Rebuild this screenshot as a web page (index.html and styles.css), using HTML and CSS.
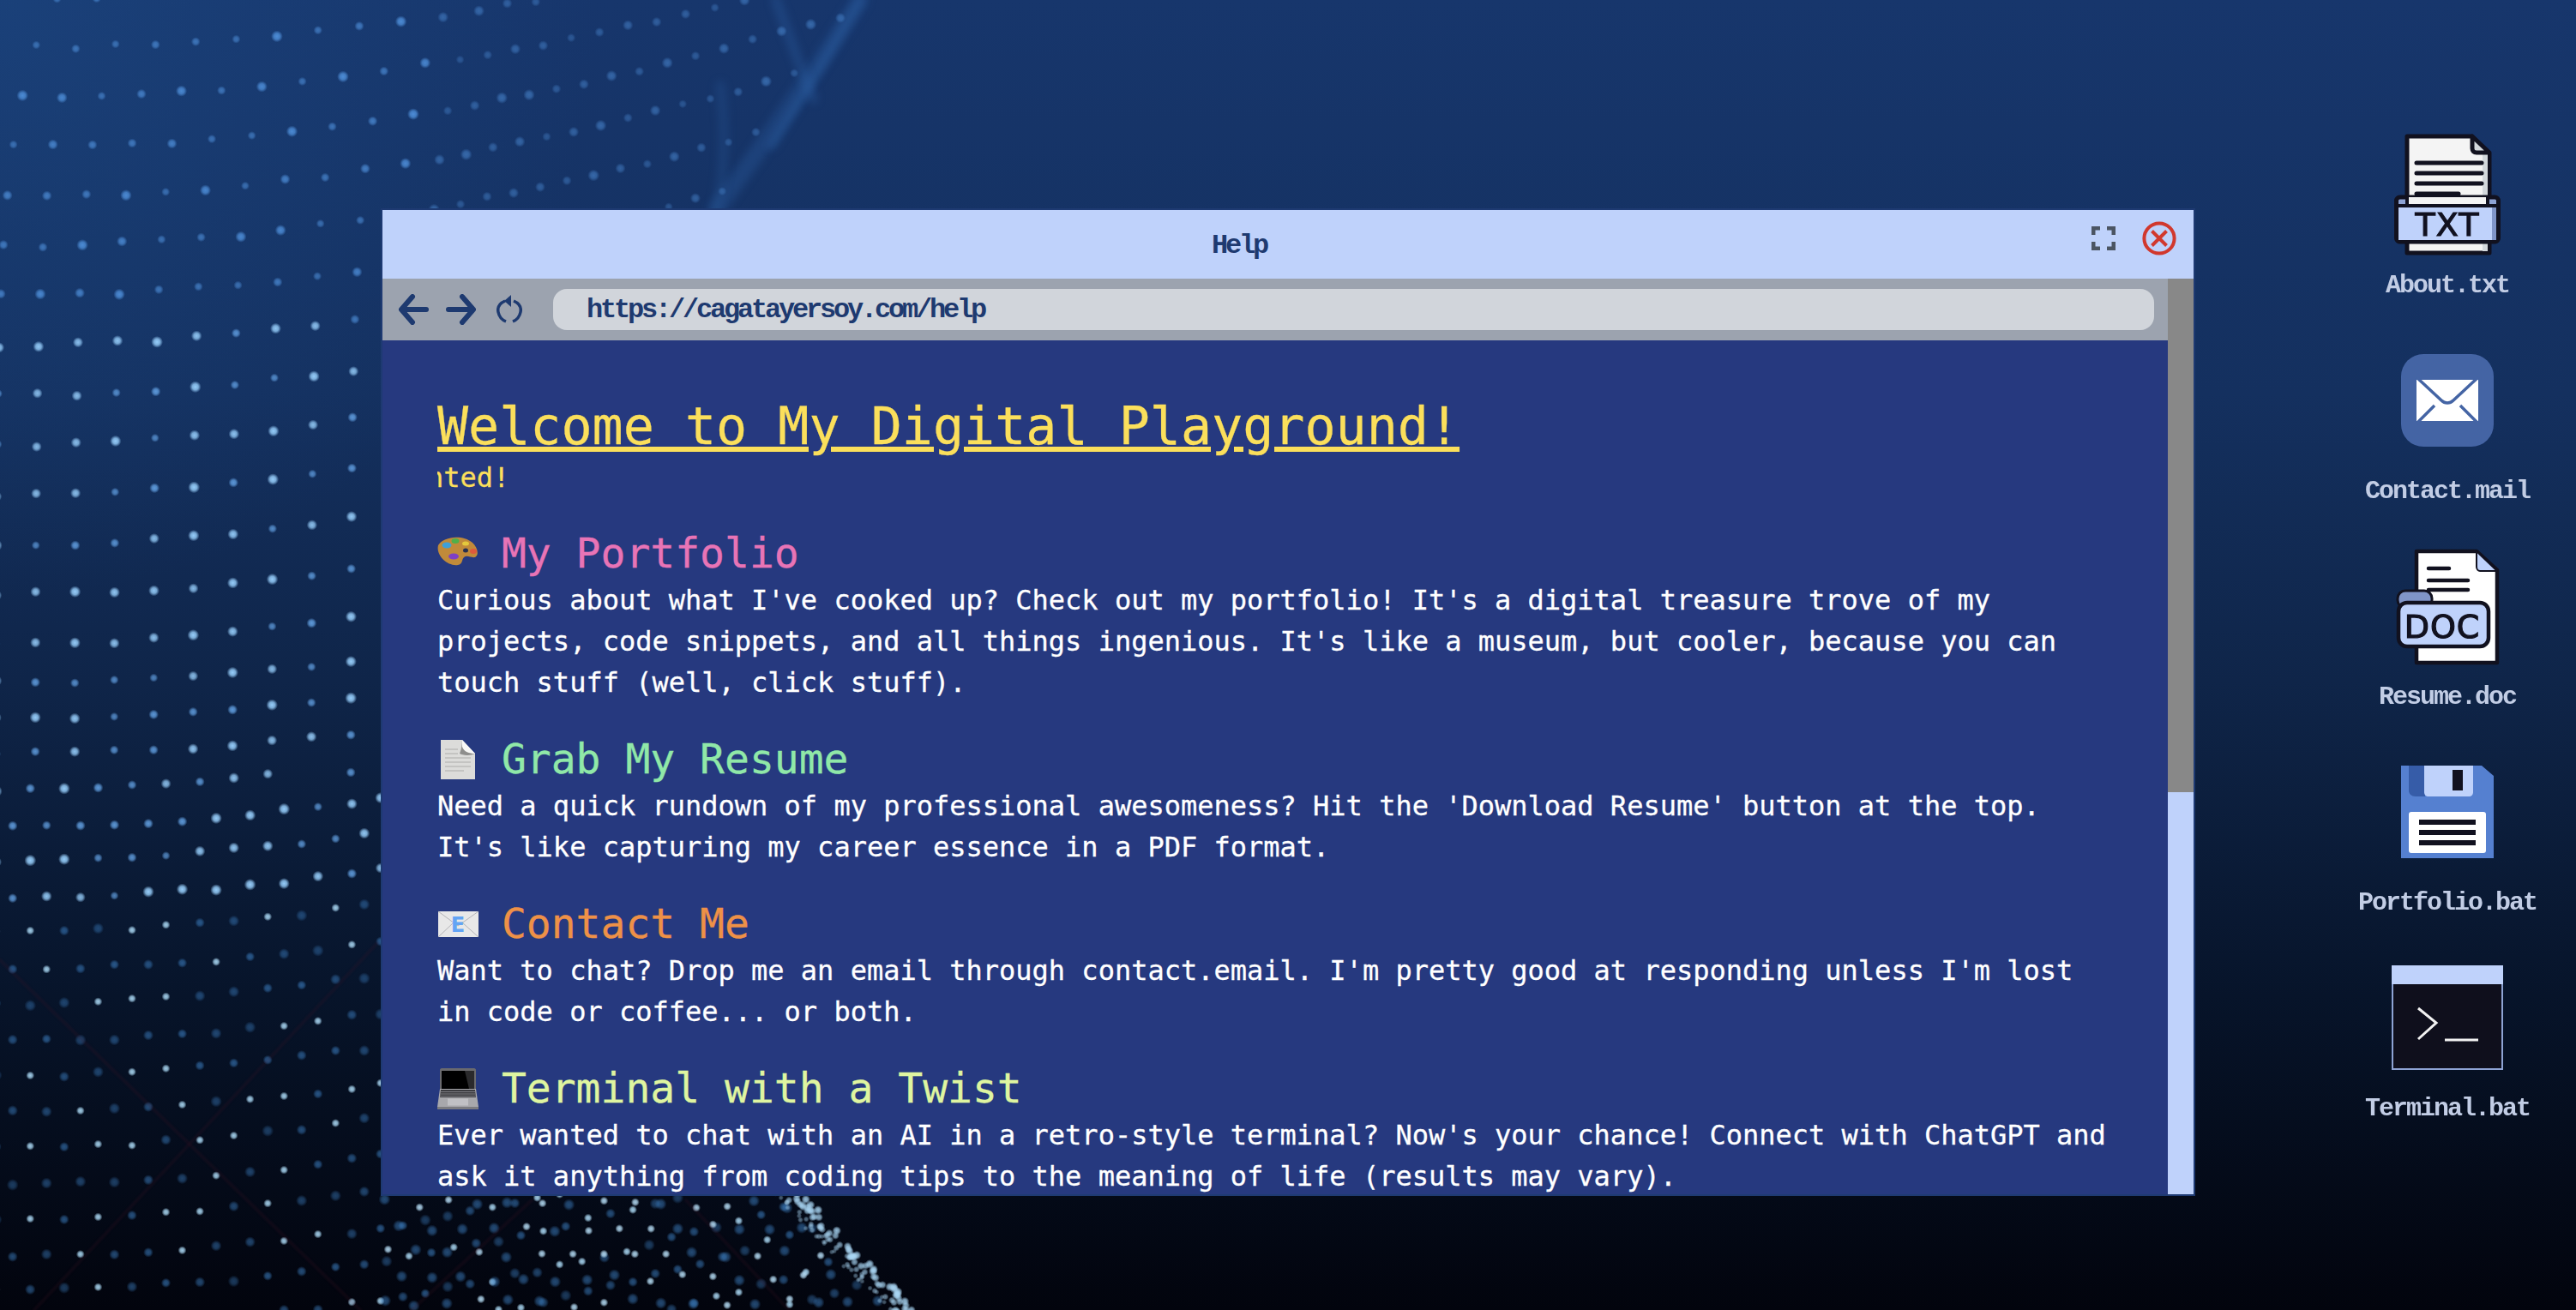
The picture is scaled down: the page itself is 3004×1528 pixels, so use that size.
FILE: index.html
```html
<!DOCTYPE html>
<html lang="en">
<head>
    <meta charset="UTF-8">
    <title>Help</title>
    <link rel="stylesheet" href="styles.css">
</head>
<body>

<canvas id="wallpaper" class="wallpaper" width="3004" height="1528"></canvas>

<div class="window">
    <div class="title-bar">
        <div class="title">Help</div>
        <div class="window-controls">
            <svg class="icon-full" viewBox="0 0 28 28"><path d="M2 10V2h8M18 2h8v8M26 18v8h-8M10 26H2v-8"/></svg>
            <svg class="icon-close" viewBox="0 0 40 40"><circle cx="20" cy="20" r="17.6"/><path d="M11.500 11.500l17 17M28.500 11.500l-17 17"/></svg>
        </div>
    </div>
    <div class="window-body">
        <div class="window-main">
            <div class="toolbar">
                <svg class="nav-arrow" viewBox="0 0 36 36"><path d="M33 18H5M17 3L4 18l13 15"/></svg>
                <svg class="nav-arrow" viewBox="0 0 36 36"><path d="M3 18h28M19 3l13 15-13 15"/></svg>
                <svg class="nav-reload" viewBox="0 0 30 34"><path d="M10 7C3 10 1 15 2 20c1 5 4 9 9 11M20 7c7 3 9 8 8 13-1 5-4 9-9 11"/><path class="solid" d="M17 0v14l-8-7z"/></svg>
                <div class="url-bar">https://cagatayersoy.com/help</div>
            </div>
            <div class="content">
                <h1>Welcome to My Digital Playground!</h1>
                <div class="tagline"><span>nted!</span></div>

                <section class="topic">
                    <h2 class="pink">
                        <svg class="emoji" viewBox="0 0 48 48">
                            <path d="M1 14C7 4 29 1 41 11c6 6 8 14 3 17-5 1-9-3-13 0-3 3-1 8-7 9C12 39-2 26 1 14z" fill="#c08a3a"/>
                            <ellipse cx="11" cy="14" rx="5.500" ry="3.500" fill="#3fa0d8"/>
                            <ellipse cx="21" cy="9" rx="4.500" ry="3" fill="#4fb04a"/>
                            <ellipse cx="33" cy="12" rx="4" ry="2.500" fill="#e4c83c"/>
                            <ellipse cx="19" cy="27" rx="6" ry="3.500" fill="#7e3fc4"/>
                            <ellipse cx="33" cy="20" rx="3" ry="2.500" fill="#26304f"/>
                            <ellipse cx="42" cy="21" rx="4" ry="3" fill="#de5a3c"/>
                        </svg>
                        My Portfolio
                    </h2>
                    <p>Curious about what I've cooked up? Check out my portfolio! It's a digital treasure trove of my projects, code snippets, and all things ingenious. It's like a museum, but cooler, because you can touch stuff (well, click stuff).</p>
                </section>

                <section class="topic">
                    <h2 class="green">
                        <svg class="emoji" viewBox="0 0 48 48">
                            <path d="M4 1h25l15 16v30H4z" fill="#dcdcda"/>
                            <path d="M29 1c0 8 2 14 15 16-6 3-15 2-18 0 2-5 3-11 3-16z" fill="#8e8e8c"/>
                            <path d="M29 1l15 16c-7 0-13-2-15-8z" fill="#f8f8f6"/>
                            <path d="M9 12h15M9 17h15M9 22h30M9 27h30M9 32h30M9 37h22" stroke="#bcbcba" stroke-width="1.500"/>
                        </svg>
                        Grab My Resume
                    </h2>
                    <p>Need a quick rundown of my professional awesomeness? Hit the 'Download Resume' button at the top. It's like capturing my career essence in a PDF format.</p>
                </section>

                <section class="topic">
                    <h2 class="orange">
                        <svg class="emoji" viewBox="0 0 48 48">
                            <rect x="1" y="9" width="47" height="30" fill="#e8e8e8"/>
                            <path d="M1 9l23 17L48 9M1 39l18-17M48 39L29 22" fill="none" stroke="#b4b4b8" stroke-width="1"/>
                            <text class="emoji-e" x="24" y="33" text-anchor="middle">E</text>
                        </svg>
                        Contact Me
                    </h2>
                    <p>Want to chat? Drop me an email through contact.email. I'm pretty good at responding unless I'm lost in code or coffee... or both.</p>
                </section>

                <section class="topic">
                    <h2 class="lime">
                        <svg class="emoji" viewBox="0 0 48 48">
                            <path d="M3 2c0-1 1-2 2-2h38c1 0 2 1 2 2v22H3z" fill="#6a6a6e"/>
                            <rect x="5" y="3" width="38" height="21" fill="#000"/>
                            <path d="M32 3h11v21h-6z" fill="#2a2a2c"/>
                            <path d="M3 24h42l3 21H0z" fill="#a8a8ac"/>
                            <path d="M4 25h40l1 9H3z" fill="#3c3c40"/>
                            <path d="M3.500 27.500h41M3.500 30h41M3.200 32.500h41.600" stroke="#8c8c90" stroke-width="0.800"/>
                            <rect x="12" y="35.500" width="24" height="8" fill="#c0c0c4"/>
                            <rect y="45" width="48" height="3" fill="#7c7c80"/>
                        </svg>
                        Terminal with a Twist
                    </h2>
                    <p>Ever wanted to chat with an AI in a retro-style terminal? Now's your chance! Connect with ChatGPT and ask it anything from coding tips to the meaning of life (results may vary).</p>
                </section>
            </div>
        </div>
        <div class="scrollbar"><div class="scrollbar-thumb"></div></div>
    </div>
</div>

<div class="desktop-icons">
    <div class="desktop-icon">
        <div class="icon-box">
            <svg width="144" height="144" viewBox="0 0 144 144">
                <path d="M25 4h75l21 21v115H25z" fill="#f4f4f4" stroke="#11111f" stroke-width="5" stroke-linejoin="round"/>
                <path d="M113 25h6v113h-6z" fill="#d3d8dc"/>
                <path d="M101 4v14c0 3 2 5 5 5h15z" fill="#d3d8dc" stroke="#11111f" stroke-width="5" stroke-linejoin="round"/>
                <path d="M36 35h76M36 47h76M36 59h76M36 71h49" stroke="#11111f" stroke-width="5" stroke-linecap="round"/>
                <rect x="12.500" y="75" width="119" height="52" rx="4" fill="#8ea3d4" stroke="#11111f" stroke-width="5"/>
                <rect x="25" y="75" width="94" height="10" fill="#f4f4f4"/>
                <rect x="15" y="87" width="114" height="38" fill="#bfd2fb"/>
                <rect x="124" y="87" width="5" height="38" fill="#8095c8"/>
                <path d="M12.500 85h119M25 75v10M119 75v10" stroke="#11111f" stroke-width="4"/>
                <text class="file-label" x="72" y="120" text-anchor="middle">TXT</text>
            </svg>
        </div>
        <div class="icon-label">About.txt</div>
    </div>
    <div class="desktop-icon">
        <div class="icon-box">
            <svg width="108" height="108" viewBox="0 0 108 108">
                <rect width="108" height="108" rx="26" fill="#4464a4"/>
                <rect x="18" y="30" width="72" height="48" fill="#fff"/>
                <path d="M18 27l29 27c4 4 10 4 14 0l29-27M18 81l21-21M90 81L69 60" fill="none" stroke="#4464a4" stroke-width="3.500"/>
            </svg>
        </div>
        <div class="icon-label">Contact.mail</div>
    </div>
    <div class="desktop-icon">
        <div class="icon-box">
            <svg width="144" height="144" viewBox="0 0 144 144">
                <path d="M36 8h70l24 22v108H36z" fill="#fff" stroke="#11111f" stroke-width="4.500" stroke-linejoin="round"/>
                <path d="M106 8v18c0 3 2 5 4 5h20z" fill="#bfd2fb" stroke="#11111f" stroke-width="2" stroke-linejoin="round"/>
                <path d="M50 28h24M50 42h46M50 53h46" stroke="#11111f" stroke-width="4.500" stroke-linecap="round"/>
                <rect x="14" y="54" width="40" height="20" rx="9" fill="#8095c8" stroke="#11111f" stroke-width="3"/>
                <rect x="15" y="68" width="105" height="51" rx="10" fill="#bfd2fb" stroke="#11111f" stroke-width="4.500"/>
                <text class="file-label" x="66" y="109" text-anchor="middle">DOC</text>
            </svg>
        </div>
        <div class="icon-label">Resume.doc</div>
    </div>
    <div class="desktop-icon">
        <div class="icon-box">
            <svg width="108" height="108" viewBox="0 0 108 108">
                <path d="M0 0h94l14 12v96H0z" fill="#5580d0"/>
                <path d="M9 0h19v36H17c-5 0-8-3-8-7z" fill="#365ca8"/>
                <path d="M27 0h57v31c0 3-2 5-5 5H32c-3 0-5-2-5-5z" fill="#bfd2fb"/>
                <rect x="60" y="5" width="12" height="24" fill="#11111f"/>
                <rect x="9" y="54" width="90" height="48" rx="3" fill="#fff"/>
                <path d="M21 66h66M21 78h66M21 90h66" stroke="#11111f" stroke-width="6"/>
            </svg>
        </div>
        <div class="icon-label">Portfolio.bat</div>
    </div>
    <div class="desktop-icon">
        <div class="icon-box">
            <svg width="130" height="122" viewBox="0 0 130 122">
                <rect x="1" y="1" width="128" height="120" fill="#0f0f1c" stroke="#8ea3d4" stroke-width="2"/>
                <rect width="130" height="22" fill="#bfd2fb"/>
                <path d="M31 50l21 17-21 19M62 87h39" fill="none" stroke="#f2f2f2" stroke-width="3"/>
            </svg>
        </div>
        <div class="icon-label">Terminal.bat</div>
    </div>
</div>

<script src="wallpaper.js"></script>
</body>
</html>
```

FILE: styles.css
```css
html, body {
    margin: 0;
    padding: 0;
    height: 100%;
}
body {
    position: relative;
    overflow: hidden;
    display: flex;
    justify-content: flex-end;
    background: radial-gradient(circle at 0 0, rgba(32, 84, 146, 0.35), rgba(32, 84, 146, 0) 700px),
        linear-gradient(to bottom, #17366c 0%, #14305f 30%, #0f2549 52%, #07142a 76%, #02040d 100%);
    font-family: "Liberation Mono", monospace;
}
.wallpaper {
    position: absolute;
    left: 0;
    top: 0;
}
.window {
    position: absolute;
    left: 444px;
    top: 243px;
    width: 2112px;
    height: 1148px;
    border: 2px solid #1e3a72;
    display: flex;
    flex-direction: column;
}
.title-bar {
    height: 80px;
    background-color: #bfd2fb;
    display: flex;
    flex-shrink: 0;
}
.title {
    flex: 1;
    text-align: center;
    color: #1e3a70;
    font-size: 32px;
    font-weight: bold;
    line-height: 84px;
    letter-spacing: -3.200px;
}
.window-controls {
    width: 114px;
    display: flex;
    gap: 31px;
    padding: 13px 0 0 0;
    margin-left: -5px;
    margin-right: 5px;
    box-sizing: border-box;
}
.icon-full {
    width: 28px;
    height: 28px;
    margin-top: 6px;
    fill: none;
    stroke: #4b5563;
    stroke-width: 5;
}
.icon-close {
    width: 40px;
    height: 40px;
    fill: none;
    stroke: #d1382d;
    stroke-width: 4;
}
.window-body {
    flex: 1;
    display: flex;
    min-height: 0;
}
.window-main {
    flex: 1;
    display: flex;
    flex-direction: column;
    min-width: 0;
}
.toolbar {
    height: 72px;
    flex-shrink: 0;
    box-sizing: border-box;
    background-color: #9ca3af;
    padding: 12px 16px 12px 18px;
    display: flex;
    align-items: center;
}
.nav-arrow {
    width: 36px;
    height: 36px;
    margin-right: 20px;
    fill: none;
    stroke: #1e3a70;
    stroke-width: 6;
    stroke-linecap: round;
    stroke-linejoin: round;
}
.nav-reload {
    width: 30px;
    height: 34px;
    margin: 0 36px 0 3px;
    fill: none;
    stroke: #1e3a70;
    stroke-width: 3.500;
}
.nav-reload .solid {
    fill: #1e3a70;
    stroke: none;
}
.url-bar {
    flex: 1;
    height: 48px;
    line-height: 50px;
    background-color: #d1d5db;
    border-radius: 16px;
    padding-left: 39px;
    color: #1e3a70;
    font-size: 32px;
    font-weight: bold;
    letter-spacing: -3.200px;
}
.content {
    flex: 1;
    min-height: 0;
    overflow: hidden;
    background-color: #26397f;
    padding: 64px 64px 0;
    font-family: "DejaVu Sans Mono", monospace;
    font-size: 32px;
    line-height: 48px;
    color: #fff;
    -webkit-text-stroke: 0.300px;
}
h1 {
    margin: 0;
    font-size: 60px;
    font-weight: normal;
    line-height: 72px;
    color: #fbdf5b;
    text-decoration: underline;
    white-space: nowrap;
}
.tagline {
    overflow: hidden;
    color: #fbdf5b;
    white-space: nowrap;
}
.tagline span {
    display: block;
    margin-left: -12px;
}
.topic {
    margin-top: 41px;
}
.topic:first-of-type {
    margin-top: 40px;
}
h2 {
    margin: 0 0 6px;
    font-size: 48px;
    font-weight: normal;
    line-height: 48px;
    white-space: nowrap;
}
.topic p {
    margin: 0;
    width: 1960px;
}
.emoji {
    height: 48px;
    width: 48px;
    margin-right: -2px;
    vertical-align: -8px;
}
.emoji-e {
    font-family: "DejaVu Sans", sans-serif;
    font-size: 24px;
    font-weight: bold;
    fill: #63a4f4;
    -webkit-text-stroke: 0;
}
.pink { color: #e874b6; }
.green { color: #90e8a8; }
.orange { color: #ee9147; }
.lime { color: #dff5a0; }
.scrollbar {
    width: 30px;
    flex-shrink: 0;
    background-color: #bfd2fb;
}
.scrollbar-thumb {
    height: 599px;
    background-color: #888;
}
.desktop-icons {
    position: relative;
    width: 300px;
    padding-top: 155px;
    display: flex;
    flex-direction: column;
    gap: 42px;
}
.desktop-icon {
    display: flex;
    flex-direction: column;
    align-items: center;
}
.icon-box {
    width: 144px;
    height: 144px;
    display: flex;
    align-items: center;
    justify-content: center;
}
.icon-label {
    margin-top: 14px;
    line-height: 40px;
    color: #c2cde5;
    font-size: 30px;
    font-weight: bold;
    letter-spacing: -2px;
}
.file-label {
    font-family: "DejaVu Sans", sans-serif;
    font-size: 38px;
    letter-spacing: 1px;
    fill: #11111f;
    stroke: #11111f;
    stroke-width: 1.200;
}
```

FILE: wallpaper.js
```js
// draws the dotted wave behind the desktop
const ctx = document.getElementById("wallpaper").getContext("2d");

function noise(a, b) {
    const n = Math.sin(a * 12.9898 + b * 78.233) * 43758.5453;
    return n - Math.floor(n);
}

function dot(x, y, r, color, alpha) {
    const g = ctx.createRadialGradient(x, y, 0, x, y, r);
    g.addColorStop(0, `rgba(${color},${alpha})`);
    g.addColorStop(0.5, `rgba(${color},${alpha * 0.8})`);
    g.addColorStop(1, `rgba(${color},0)`);
    ctx.fillStyle = g;
    ctx.beginPath();
    ctx.arc(x, y, r, 0, Math.PI * 2);
    ctx.fill();
}

// right edge of the dotted cloth, by height
function edge(y) {
    if (y < 245) return 1000 - y * 0.7;
    if (y < 800) return 830 - (y - 245) * 0.14;
    return 752 + Math.pow((y - 800) / 728, 2.4) * 300;
}

// lighter ribbon at the top of the wave, drawn under the dots
ctx.lineCap = "round";
ctx.filter = "blur(5px)";
[
    [1003, 0, 940, 100, 835, 245, 20, 0.3],
    [1003, 0, 950, 90, 900, 170, 9, 0.4],
    [905, 0, 930, 70, 948, 115, 12, 0.3],
    [840, 100, 850, 180, 835, 245, 12, 0.22]
].forEach(function (c) {
    ctx.strokeStyle = `rgba(46,100,170,${c[7]})`;
    ctx.lineWidth = c[6];
    ctx.beginPath();
    ctx.moveTo(c[0], c[1]);
    ctx.quadraticCurveTo(c[2], c[3], c[4], c[5]);
    ctx.stroke();
});
ctx.filter = "none";

for (let j = 0; j < 44; j++) {
    for (let i = -6; i < 40; i++) {
        let bx = j * 46 - 5;
        if (bx > 480) bx = 480 + (bx - 480) * 0.66;
        let y = i * 58 + 55 - 0.00018 * bx * bx;
        if (y > 760) y = 760 + (y - 760) * 0.72;
        let x = bx + 70 * Math.exp(-y / 140);
        if (y > 900) x = x * 0.86 + (i % 2) * 19;
        y += (noise(j, i) - 0.5) * 5;
        if (y < -5 || y > 1530 || x < -5 || x > edge(y)) continue;

        const n = noise(i, j);
        let alpha = 0.6 + n * 0.35;
        let r = 5 + n * 2;
        let color = "80,145,220";
        if (y < 330 && x > 500) alpha *= 0.6;
        if (y > 380 && y < 1050) {
            color = n > 0.5 ? "150,205,250" : "105,170,238";
            alpha = Math.min(1, alpha + 0.1);
        }
        if (y > 1050) {
            r = 7 - n * 2;
            color = "62,130,198";
            alpha = 0.42 + n * 0.3;
            if (n > 0.68) {
                color = "175,222,250";
                alpha = 0.9;
                r = 5;
            }
        }
        dot(x, y, r, color, alpha);
    }
}

// the stretch of cloth showing under the window
for (let row = 0; row < 5; row++) {
    for (let col = 0; col < 18; col++) {
        const n = noise(row + 50, col);
        const y = 1404 + row * 29 + (noise(col, row) - 0.5) * 10;
        const x = 450 + col * 36 + (row % 2) * 18 + (n - 0.5) * 8;
        if (x > edge(y) - 12) continue;
        if (n > 0.6) dot(x, y, 5, "185,225,250", 0.9);
        else dot(x, y, 7, "62,130,198", 0.55);
    }
}

// faint dark lines low on the left
ctx.strokeStyle = "rgba(70,20,40,0.18)";
ctx.lineWidth = 4;
ctx.filter = "blur(1px)";
[[0, 1120, 420, 1528], [440, 1100, 40, 1528], [620, 1400, 480, 1528], [800, 1400, 920, 1528]].forEach(function (l) {
    ctx.beginPath();
    ctx.moveTo(l[0], l[1]);
    ctx.lineTo(l[2], l[3]);
    ctx.stroke();
});
ctx.filter = "none";

// bright crest running off the bottom
for (let k = 0; k < 110; k++) {
    const t = k / 110;
    const n = noise(k, 7);
    const x = 915 + t * 142 + (n - 0.5) * 30;
    const y = 1392 + t * 140 + (noise(k, 3) - 0.5) * 10;
    dot(x, y, 3 + n * 2.5, "170,215,245", 0.4 + n * 0.5);
}
```
